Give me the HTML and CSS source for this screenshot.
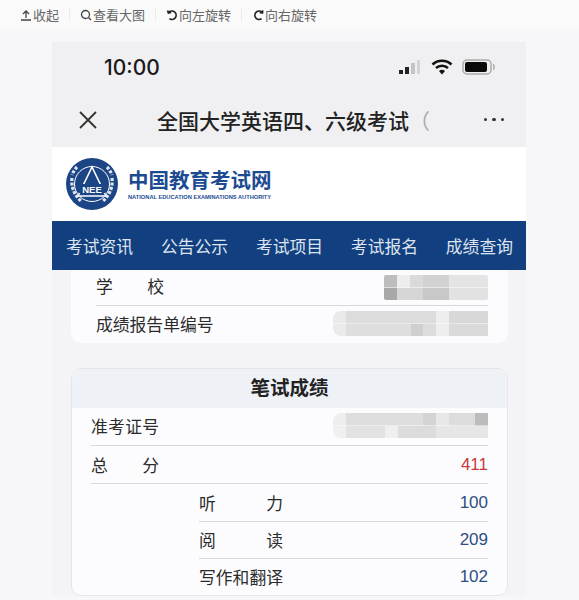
FILE: index.html
```html
<!DOCTYPE html>
<html lang="zh-CN">
<head>
  <meta charset="UTF-8" />
  <meta name="viewport" content="width=device-width, initial-scale=1.0"/>
  <title>全国大学英语四、六级考试</title>
  <link rel="stylesheet" href="styles.css">
</head>
<body>
  <div class="toolbar">
    <a class="tool">
      <svg class="tool-icon" viewBox="0 0 12 12"><path d="M6 9V2M3 5l3-3 3 3M1 11h10"/></svg>收起
    </a>
    <i class="sep"></i>
    <a class="tool">
      <svg class="tool-icon" viewBox="0 0 12 12"><circle cx="5.500" cy="5.500" r="4"/><path d="M8.500 8.500l2.500 2.500"/></svg>查看大图
    </a>
    <i class="sep"></i>
    <a class="tool">
      <svg class="tool-icon thick" viewBox="0 0 12 12"><path d="M3 3.200A4.200 4.200 0 1 1 3.400 9.600M1.600 1.400l.8 2.600 2.700-.6"/></svg>向左旋转
    </a>
    <i class="sep"></i>
    <a class="tool">
      <svg class="tool-icon thick" viewBox="0 0 12 12"><path d="M10 3.200A4.200 4.200 0 1 0 9.600 9.600M10.800 1.400l-.4 2.600-2.700-.6"/></svg>向右旋转
    </a>
  </div>

  <div class="phone">
    <div class="status-bar">
      <span class="clock">10:00</span>
      <div class="status-icons">
        <svg class="signal" width="24" height="16" viewBox="0 0 24 16">
          <rect x="1" y="11" width="4" height="4" fill="#222"/>
          <rect x="7" y="8" width="4" height="7" fill="#222"/>
          <rect x="13" y="4" width="4" height="11" fill="#c4c4c6"/>
          <rect x="19" y="1" width="3" height="14" fill="#d4d4d6"/>
        </svg>
        <svg class="wifi" width="22" height="16" viewBox="0 0 22 16">
          <path d="M1.500 5.500a14 14 0 0 1 19 0M5 9a9 9 0 0 1 12 0" fill="none" stroke="#111" stroke-width="2.600"/>
          <path d="M8 12a4.500 4.500 0 0 1 6 0l-3 3.500z" fill="#111"/>
        </svg>
        <svg class="battery" width="34" height="16" viewBox="0 0 34 16">
          <rect x="1" y="1" width="28" height="14" rx="4" fill="none" stroke="#aaa" stroke-width="1.500"/>
          <rect x="3" y="3" width="22" height="10" rx="2" fill="#0a0a0a"/>
          <path d="M31 5.500c1.500.5 1.500 4.500 0 5" fill="none" stroke="#aaa" stroke-width="1.500"/>
        </svg>
      </div>
    </div>

    <div class="title-bar">
      <svg class="close" width="20" height="20" viewBox="0 0 20 20"><path d="M2 2l16 16M18 2L2 18"/></svg>
      <h1>全国大学英语四、六级考试<span class="cut">（</span></h1>
      <div class="dots"><i></i><i></i><i></i></div>
    </div>

    <div class="logo-bar">
      <svg class="emblem" width="52" height="52" viewBox="0 0 52 52">
        <circle cx="26" cy="26" r="26" fill="#1c4585"/>
        <circle cx="26" cy="26" r="17.500" fill="none" stroke="#fff" stroke-width="1"/>
        <path d="M6 20c-1 9 2 17 10 24M46 20c1 9-2 17-10 24M11 9c-2 2-4 5-5 8M41 9c2 2 4 5 5 8" fill="none" stroke="#dfe6f0" stroke-width="3.200" stroke-dasharray="3 1.500"/>
        <path d="M26 9L12 38h28z" fill="none" stroke="#fff" stroke-width="1.600"/>
        <rect x="13" y="26" width="26" height="9" fill="#1c4585"/>
        <text class="emblem-text" x="26" y="34.500" text-anchor="middle">NEE</text>
      </svg>
      <div class="logo-text">
        <div class="logo-cn">中国教育考试网</div>
        <div class="logo-en">NATIONAL EDUCATION EXAMINATIONS AUTHORITY</div>
      </div>
    </div>

    <nav class="nav">
      <a>考试资讯</a>
      <a>公告公示</a>
      <a>考试项目</a>
      <a>考试报名</a>
      <a>成绩查询</a>
    </nav>

    <div class="content">
      <section class="card card-top">
        <div class="row first">
          <span class="label wide">学校</span>
          <span class="mosaic mosaic-school"></span>
        </div>
        <div class="row">
          <span class="label">成绩报告单编号</span>
          <span class="mosaic mosaic-report"></span>
        </div>
      </section>

      <section class="card card-score">
        <h2>笔试成绩</h2>
        <div class="rows">
          <div class="row">
            <span class="label wide">准考证号</span>
            <span class="mosaic mosaic-ticket"></span>
          </div>
          <div class="row">
            <span class="label wide">总分</span>
            <span class="value total">411</span>
          </div>
          <div class="sub-rows">
            <div class="row">
              <span class="label wider">听力</span>
              <span class="value">100</span>
            </div>
            <div class="row">
              <span class="label wider">阅读</span>
              <span class="value">209</span>
            </div>
            <div class="row">
              <span class="label wider">写作和翻译</span>
              <span class="value">102</span>
            </div>
          </div>
        </div>
      </section>
    </div>
  </div>
</body>
</html>
```

FILE: styles.css
```css
body {
  margin: 0;
  width: 579px;
  height: 600px;
  overflow: hidden;
  background: #f7f7f9;
  font-family: "Liberation Sans", "Noto Sans CJK SC", sans-serif;
  color: #2b2b2b;
}

.toolbar {
  display: flex;
  align-items: center;
  height: 29px;
  padding-left: 20px;
  font-size: 13px;
  color: #666;
  background: #fafafa;
}

.tool {
  display: flex;
  align-items: center;
}

.tool-icon {
  width: 12px;
  height: 12px;
  margin-right: 1px;
  fill: none;
  stroke: #444;
  stroke-width: 1.300;
}

.tool-icon.thick {
  stroke: #222;
  stroke-width: 1.700;
}

.sep {
  width: 1px;
  height: 14px;
  margin: 0 10px;
  background: #ececec;
}

.phone {
  width: 474px;
  margin: 13px 0 0 52px;
  background: #f4f4f7;
}

.status-bar {
  display: flex;
  align-items: center;
  justify-content: space-between;
  height: 50px;
  padding: 0 30px 0 52px;
  background: #f0f0f2;
}

.clock {
  font-family: Inter, "Liberation Sans", sans-serif;
  font-size: 21px;
  font-weight: 500;
  color: #1a1a1a;
}

.status-icons {
  display: flex;
  align-items: center;
  gap: 9px;
}

.title-bar {
  display: flex;
  align-items: center;
  height: 55px;
  padding: 0 22px 0 26px;
  background: #f0f0f2;
}

.close {
  fill: none;
  stroke: #333;
  stroke-width: 1.800;
}

.title-bar h1 {
  flex: 1;
  margin: 0 0 0 59px;
  font-size: 21px;
  font-weight: 500;
  color: #222;
  white-space: nowrap;
  overflow: hidden;
}

.cut {
  color: #aaa;
  font-weight: 400;
}

.dots {
  display: flex;
  gap: 5px;
}

.dots i {
  width: 3.500px;
  height: 3.500px;
  border-radius: 50%;
  background: #333;
}

.logo-bar {
  display: flex;
  align-items: center;
  height: 74px;
  padding-left: 14px;
  background: #fff;
}

.emblem-text {
  font-size: 9.500px;
  font-weight: 700;
  fill: #fff;
}

.logo-text {
  width: 144px;
  margin: 1px 0 0 10px;
}

.logo-cn {
  font-size: 20.500px;
  line-height: 25px;
  font-weight: 700;
  color: #1d4b92;
  white-space: nowrap;
}

.logo-en {
  font-size: 5.700px;
  line-height: 8px;
  font-weight: 700;
  color: #1d4b92;
  white-space: nowrap;
}

.nav {
  display: flex;
  justify-content: space-between;
  align-items: center;
  height: 49px;
  padding: 0 13px 0 14px;
  font-size: 16.800px;
  color: #dde4ef;
  background: #123f80;
}

.content {
  padding: 0 18px 0 19px;
}

.card {
  background: #fcfcfe;
}

.card-top {
  height: 73px;
  padding: 0 20px 0 25px;
  border-radius: 0 0 10px 10px;
}

.row {
  display: flex;
  align-items: center;
  justify-content: space-between;
  height: 37px;
  box-sizing: border-box;
  border-top: 1px solid #d8d8d8;
  padding-bottom: 1px;
  font-size: 16.800px;
}

.row:first-child {
  border-top: 0;
}

.card-top .row.first {
  height: 35px;
  padding-bottom: 0;
}

.label {
  white-space: nowrap;
}

.card-top .row.first .label {
  margin-bottom: 4px;
}

.wide {
  width: 68px;
  text-align-last: justify;
}

.wider {
  width: 84px;
  text-align-last: justify;
}

.mosaic {
  display: block;
  flex: none;
  border-radius: 2px;
}

.mosaic-school {
  width: 104px;
  height: 25px;
  background:
    linear-gradient(90deg, #bdbdbd 0 13px, #ededed 13px 26px, #dadada 26px 39px, #d2d2d2 39px 65px, #e4e4e4 65px) top / 100% 50% no-repeat,
    linear-gradient(90deg, #a8a8a8 0 13px, #d6d6d6 13px 39px, #c8c8c8 39px 65px, #e2e2e2 65px) bottom / 100% 50% no-repeat;
}

.mosaic-report {
  width: 155px;
  height: 25px;
  border-radius: 8px 0 0 8px;
  background:
    linear-gradient(90deg, #eaeaea 0 13px, #dcdcdc 13px 103px, #eeeeee 103px 116px, #d8d8d8 116px) top / 100% 50% no-repeat,
    linear-gradient(90deg, #eaeaea 0 13px, #dedede 13px 78px, #cfcfcf 78px 90px, #dcdcdc 90px 103px, #eeeeee 103px 116px, #dadada 116px) bottom / 100% 50% no-repeat;
}

.mosaic-ticket {
  width: 155px;
  height: 25px;
  border-radius: 8px 0 0 8px;
  background:
    linear-gradient(90deg, #eeeeee 0 13px, #dedede 13px 90px, #d4d4d4 90px 103px, #e8e8e8 103px 116px, #dcdcdc 116px 142px, #bcbcbc 142px) top / 100% 50% no-repeat,
    linear-gradient(90deg, #f0f0f0 0 13px, #e2e2e2 13px 52px, #efefef 52px 65px, #dcdcdc 65px 103px, #e6e6e6 103px) bottom / 100% 50% no-repeat;
}

.card-score {
  margin-top: 25px;
  height: 228px;
  border: 1px solid #e4e6ea;
  border-radius: 10px;
  box-sizing: border-box;
}

.card-score h2 {
  margin: 0;
  height: 39px;
  line-height: 39px;
  text-align: center;
  font-size: 19.500px;
  font-weight: 700;
  color: #222;
  background: #eef1f6;
  border-radius: 10px 10px 0 0;
}

.rows {
  padding: 0 19px;
}

.rows .row {
  height: 38px;
  padding-bottom: 0;
}

.rows > .row:first-child {
  height: 37px;
  padding-bottom: 2px;
}

.sub-rows {
  padding-left: 108px;
  border-top: 1px solid #d8d8d8;
}

.sub-rows .row {
  height: 37px;
}

.value {
  font-size: 17px;
  color: #2c4f85;
}

.total {
  color: #c9393a;
}
```
